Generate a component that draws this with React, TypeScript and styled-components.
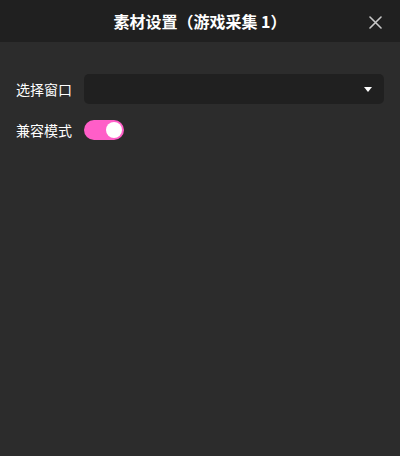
import React, { useState } from 'react';
import styled, { createGlobalStyle } from 'styled-components';

const GlobalStyle = createGlobalStyle`
  html, body {
    margin: 0;
    padding: 0;
    background: #2c2c2c;
  }
  body {
    font-family: 'Noto Sans CJK SC', 'Noto Sans', sans-serif;
  }
`;

const Panel = styled.div`
  width: 400px;
  height: 456px;
  background: #2c2c2c;
  display: flex;
  flex-direction: column;
`;

const Header = styled.div`
  height: 42px;
  background: #202020;
  display: flex;
  align-items: center;
  justify-content: center;
  position: relative;
`;

const Title = styled.h1`
  margin: 0;
  font-size: 16px;
  font-weight: 700;
  color: #ffffff;
  line-height: 42px;
`;

const CloseButton = styled.button`
  position: absolute;
  right: 18px;
  top: 15px;
  width: 14px;
  height: 14px;
  padding: 0;
  border: none;
  background: none;
  display: flex;
  align-items: center;
  justify-content: center;
  cursor: pointer;
`;

const Body = styled.div`
  padding: 32px 16px 16px 16px;
  display: flex;
  flex-direction: column;
  gap: 16px;
`;

const Row = styled.div<{ $height: number }>`
  display: flex;
  align-items: center;
  height: ${(p) => p.$height}px;
`;

const Label = styled.label`
  width: 68px;
  flex-shrink: 0;
  font-size: 14px;
  color: #ffffff;
`;

const Select = styled.div`
  flex: 1;
  height: 30px;
  background: #202020;
  border-radius: 5px;
  display: flex;
  align-items: center;
  justify-content: flex-end;
  padding-right: 12px;
`;

const Caret = styled.span`
  width: 0;
  height: 0;
  border-left: 4px solid transparent;
  border-right: 4px solid transparent;
  border-top: 5px solid #ffffff;
`;

const Toggle = styled.button<{ $on: boolean }>`
  width: 40px;
  height: 20px;
  border-radius: 10px;
  border: none;
  padding: 2px;
  background: ${(p) => (p.$on ? '#ff5ec8' : '#555555')};
  display: flex;
  justify-content: ${(p) => (p.$on ? 'flex-end' : 'flex-start')};
  align-items: center;
  cursor: pointer;
`;

const Knob = styled.span`
  width: 16px;
  height: 16px;
  border-radius: 50%;
  background: #ffffff;
`;

export default function App() {
  const [compat, setCompat] = useState(true);

  return (
    <Panel>
      <GlobalStyle />
      <Header>
        <Title>素材设置（游戏采集 1）</Title>
        <CloseButton aria-label="close">
          <svg width="13" height="13" viewBox="0 0 13 13">
            <path d="M1 1 L12 12 M12 1 L1 12" stroke="#c8c8c8" strokeWidth="1.6" strokeLinecap="round" />
          </svg>
        </CloseButton>
      </Header>
      <Body>
        <Row $height={30}>
          <Label>选择窗口</Label>
          <Select>
            <Caret />
          </Select>
        </Row>
        <Row $height={20}>
          <Label>兼容模式</Label>
          <Toggle $on={compat} onClick={() => setCompat(!compat)}>
            <Knob />
          </Toggle>
        </Row>
      </Body>
    </Panel>
  );
}
